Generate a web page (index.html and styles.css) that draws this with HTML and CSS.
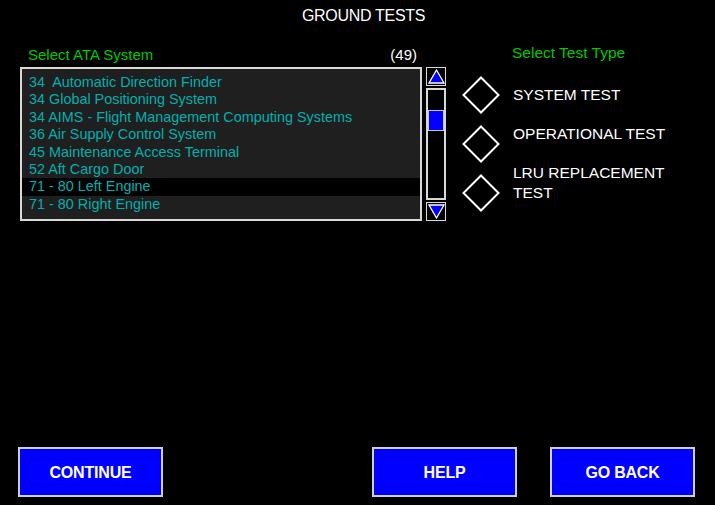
FILE: index.html
```html
<!DOCTYPE html>
<html>
<head>
<meta charset="utf-8">
<link rel="stylesheet" href="styles.css">
</head>
<body>
<div class="screen">
  <div class="title">GROUND TESTS</div>
  <div class="main">
    <div class="left">
      <div class="label-row">
        <span class="label">Select ATA System</span>
        <span class="count">(49)</span>
      </div>
      <div class="list-row">
        <div class="listbox">
          <div class="item">34&nbsp; Automatic Direction Finder</div>
          <div class="item">34 Global Positioning System</div>
          <div class="item">34 AIMS - Flight Management Computing Systems</div>
          <div class="item">36 Air Supply Control System</div>
          <div class="item">45 Maintenance Access Terminal</div>
          <div class="item">52 Aft Cargo Door</div>
          <div class="item selected">71 - 80 Left Engine</div>
          <div class="item">71 - 80 Right Engine</div>
        </div>
        <div class="scrollbar">
          <div class="sbtn">
            <svg width="17" height="15" viewBox="0 0 17 15"><polygon points="8.5,1 16,14 1,14" fill="#0000ff" stroke="#ffffff" stroke-width="1.3"/></svg>
          </div>
          <div class="track"><div class="thumb"></div></div>
          <div class="sbtn">
            <svg width="17" height="15" viewBox="0 0 17 15"><polygon points="1,1 16,1 8.5,14" fill="#0000ff" stroke="#ffffff" stroke-width="1.3"/></svg>
          </div>
        </div>
      </div>
    </div>
    <div class="right">
      <div class="label rlabel">Select Test Type</div>
      <div class="options">
        <div class="diamonds">
          <svg class="diamond" width="38" height="38" viewBox="0 0 38 38"><polygon points="19,1.5 36.5,19 19,36.5 1.5,19" fill="none" stroke="#fff" stroke-width="2"/></svg>
          <svg class="diamond" width="38" height="38" viewBox="0 0 38 38"><polygon points="19,1.5 36.5,19 19,36.5 1.5,19" fill="none" stroke="#fff" stroke-width="2"/></svg>
          <svg class="diamond" width="38" height="38" viewBox="0 0 38 38"><polygon points="19,1.5 36.5,19 19,36.5 1.5,19" fill="none" stroke="#fff" stroke-width="2"/></svg>
        </div>
        <div class="opt-texts">
          <div class="opt">SYSTEM TEST</div>
          <div class="opt">OPERATIONAL TEST</div>
          <div class="opt">LRU REPLACEMENT<br>TEST</div>
        </div>
      </div>
    </div>
  </div>
  <div class="footer">
    <div class="btn">CONTINUE</div>
    <div class="spacer"></div>
    <div class="btn">HELP</div>
    <div class="btn">GO BACK</div>
  </div>
</div>
</body>
</html>
```

FILE: styles.css
```css
html, body {
  margin: 0;
  padding: 0;
  background: #000;
}
.screen {
  width: 715px;
  height: 505px;
  display: flex;
  flex-direction: column;
  font-family: "Liberation Sans", Arial, sans-serif;
  color: #fff;
  box-sizing: border-box;
}
.title {
  text-align: center;
  font-size: 16px;
  line-height: 18px;
  padding: 7px 0 0 12px;
  height: 27px;
  letter-spacing: -0.3px;
}
.main {
  flex: 1;
  display: flex;
  padding-left: 20px;
}
.left {
  width: 426px;
  display: flex;
  flex-direction: column;
}
.label-row {
  display: flex;
  justify-content: space-between;
  padding: 12px 29px 0 8px;
  height: 33px;
  box-sizing: border-box;
  font-size: 15px;
  line-height: 18px;
}
.label {
  color: #00c800;
}
.count {
  color: #fff;
}
.list-row {
  display: flex;
  gap: 4px;
}
.listbox {
  width: 402px;
  height: 154px;
  box-sizing: border-box;
  border: 2px solid #d8d8d8;
  background: #1f1f1f;
  padding-top: 5px;
}
.item {
  height: 17.4px;
  line-height: 17.4px;
  font-size: 14.4px;
  color: #00b0b0;
  padding-left: 7px;
  white-space: nowrap;
}
.item.selected {
  background: #000;
}
.scrollbar {
  width: 20px;
  display: flex;
  flex-direction: column;
  gap: 2px;
}
.sbtn {
  height: 19px;
  box-sizing: border-box;
  border: 1px solid #d8d8d8;
  background: #000;
  display: flex;
  align-items: center;
  justify-content: center;
}
.track {
  flex: 1;
  box-sizing: border-box;
  border: 2px solid #d8d8d8;
  background: #000;
  padding-top: 20px;
  display: flex;
  justify-content: center;
}
.thumb {
  width: 16px;
  height: 21px;
  box-sizing: border-box;
  border: 1px solid #c8c8c8;
  background: #0000ff;
}
.right {
  flex: 1;
  padding-left: 16px;
  display: flex;
  flex-direction: column;
}
.rlabel {
  padding: 10px 0 0 50px;
  height: 32px;
  box-sizing: border-box;
  font-size: 15.5px;
  line-height: 18px;
}
.options {
  display: flex;
  gap: 13px;
}
.diamonds {
  display: flex;
  flex-direction: column;
  gap: 11px;
  padding-top: 10px;
}
.diamond {
  display: block;
}
.opt-texts {
  display: flex;
  flex-direction: column;
  gap: 19px;
  padding-top: 19px;
  font-size: 15.5px;
  line-height: 20px;
}
.footer {
  display: flex;
  gap: 33px;
  padding: 0 21px 8px 18px;
}
.spacer {
  flex: 1;
}
.btn {
  width: 145px;
  height: 50px;
  box-sizing: border-box;
  border: 2px solid #cfcfcf;
  background: #0000ff;
  color: #fff;
  font-weight: bold;
  font-size: 16px;
  letter-spacing: -0.2px;
  padding-top: 2px;
  display: flex;
  align-items: center;
  justify-content: center;
}
.btn + .btn {
  margin-left: 1px;
}
.footer .btn:last-child {
  margin-left: 0;
  margin-right: -1px;
}
```
